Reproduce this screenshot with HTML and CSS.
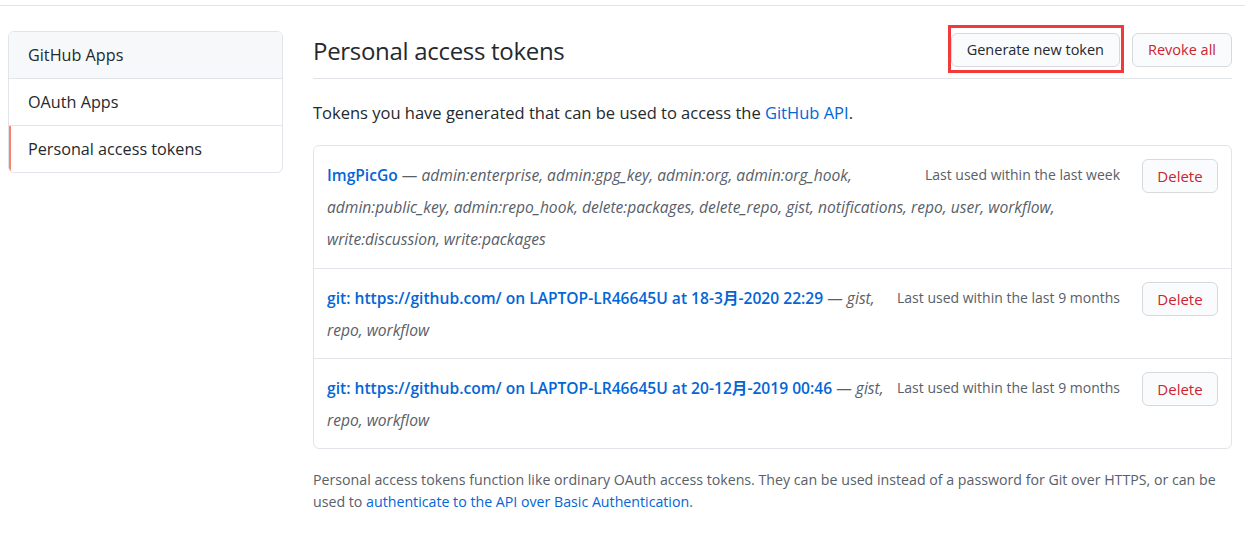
FILE: index.html
```html
<!DOCTYPE html>
<html lang="en">
<head>
<meta charset="utf-8">
<title>Personal access tokens</title>
<link rel="stylesheet" href="styles.css">
</head>
<body>
<div class="topline"></div>
<div class="layout">
  <nav class="menu">
    <a class="menu-item first">GitHub Apps</a>
    <a class="menu-item">OAuth Apps</a>
    <a class="menu-item selected">Personal access tokens</a>
  </nav>
  <main class="main">
    <div class="subhead">
      <h2 class="subhead-title">Personal access tokens</h2>
      <div class="actions">
        <span class="highlight-wrap">
          <a class="btn">Generate new token</a>
          <span class="highlight"></span>
        </span>
        <a class="btn btn-danger">Revoke all</a>
      </div>
    </div>
    <p class="intro">Tokens you have generated that can be used to access the <a class="link">GitHub API</a>.</p>
    <div class="box">
      <div class="row">
        <div class="row-btn"><a class="btn btn-sm btn-danger">Delete</a></div>
        <small class="last-used">Last used within the last week</small>
        <span class="desc"><strong class="token-name">ImgPicGo</strong> — <em>admin:enterprise, admin:gpg_key, admin:org, admin:org_hook, admin:public_key, admin:repo_hook, delete:packages, delete_repo, gist, notifications, repo, user, workflow, write:discussion, write:packages</em></span>
      </div>
      <div class="row">
        <div class="row-btn"><a class="btn btn-sm btn-danger">Delete</a></div>
        <small class="last-used">Last used within the last 9 months</small>
        <span class="desc"><strong class="token-name">git: https://github.com/ on LAPTOP-LR46645U at 18-3月-2020 22:29</strong> — <em>gist, repo, workflow</em></span>
      </div>
      <div class="row">
        <div class="row-btn"><a class="btn btn-sm btn-danger">Delete</a></div>
        <small class="last-used">Last used within the last 9 months</small>
        <span class="desc"><strong class="token-name">git: https://github.com/ on LAPTOP-LR46645U at 20-12月-2019 00:46</strong> — <em>gist, repo, workflow</em></span>
      </div>
    </div>
    <p class="note">Personal access tokens function like ordinary OAuth access tokens. They can be used instead of a password for Git over HTTPS, or can be used to <a class="link">authenticate to the API over Basic Authentication</a>.</p>
  </main>
</div>
</body>
</html>
```
FILE: styles.css
```css
html, body {
  margin: 0;
  padding: 0;
  background: #fff;
}
body {
  font-family: "Open Sans", "Noto Sans", "Noto Sans CJK SC", sans-serif;
  color: #24292e;
  font-size: 14px;
}
.topline {
  height: 5px;
  border-bottom: 1px solid #e1e4e8;
}
.layout {
  display: flex;
  gap: 30px;
  padding: 25px 13px 0 8px;
}
.menu {
  width: 273px;
  flex: none;
  align-self: flex-start;
  border: 1px solid #e1e4e8;
  border-radius: 6px;
  display: flex;
  flex-direction: column;
  overflow: hidden;
}
.menu-item {
  position: relative;
  display: block;
  padding: 11px 19px;
  font-size: 16.2px;
  line-height: 24px;
  color: #24292e;
  border-top: 1px solid #e1e4e8;
}
.menu-item.first {
  border-top: 0;
  background: #f6f8fa;
}
.menu-item.selected::before {
  content: "";
  position: absolute;
  left: 0;
  top: 0;
  bottom: 0;
  width: 2px;
  background: #f9826c;
}
.main {
  flex: 1;
  min-width: 0;
}
.subhead {
  display: flex;
  align-items: center;
  justify-content: space-between;
  height: 39px;
  padding-bottom: 8px;
  border-bottom: 1px solid #e1e4e8;
}
.subhead-title {
  margin: 0;
  font-size: 24px;
  font-weight: 400;
  line-height: 36px;
  letter-spacing: -0.3px;
}
.actions {
  display: flex;
  gap: 12px;
  margin-top: -2px;
}
.highlight-wrap {
  position: relative;
  display: inline-flex;
}
.highlight {
  position: absolute;
  left: -3px;
  right: -4px;
  top: -8px;
  bottom: -6px;
  border: 3px solid #f23a3a;
  pointer-events: none;
}
.btn {
  display: inline-flex;
  align-items: center;
  justify-content: center;
  box-sizing: border-box;
  height: 34px;
  padding: 0 15px;
  font-size: 14.5px;
  font-weight: 500;
  color: #24292e;
  background: #fafbfc;
  border: 1px solid #d7dadd;
  border-radius: 6px;
  white-space: nowrap;
}
.btn-danger {
  color: #cb2431;
}
.intro {
  margin: 22px 0 20px;
  font-size: 16.5px;
  line-height: 24px;
}
.link {
  color: #0366d6;
}
.box {
  border: 1px solid #e1e4e8;
  border-radius: 6px;
}
.row {
  padding: 13px 13px 12px;
  line-height: 32px;
  font-size: 15.6px;
  border-top: 1px solid #e1e4e8;
}
.row:first-child {
  border-top: 0;
  padding-bottom: 13px;
}
.row::after {
  content: "";
  display: block;
  clear: both;
}
.row-btn {
  float: right;
}
.btn-sm {
  width: 76px;
  padding: 0;
  font-size: 15px;
  font-weight: 400;
}
.last-used {
  float: right;
  margin-right: 22px;
  font-size: 14px;
  color: #586069;
  line-height: 32px;
}
.desc {
  color: #586069;
}
.token-name {
  color: #0366d6;
  font-weight: 600;
}
.desc em {
  color: #586069;
}
.note {
  margin: 20px 0 0;
  font-size: 14.2px;
  line-height: 22px;
  color: #586069;
}
```
